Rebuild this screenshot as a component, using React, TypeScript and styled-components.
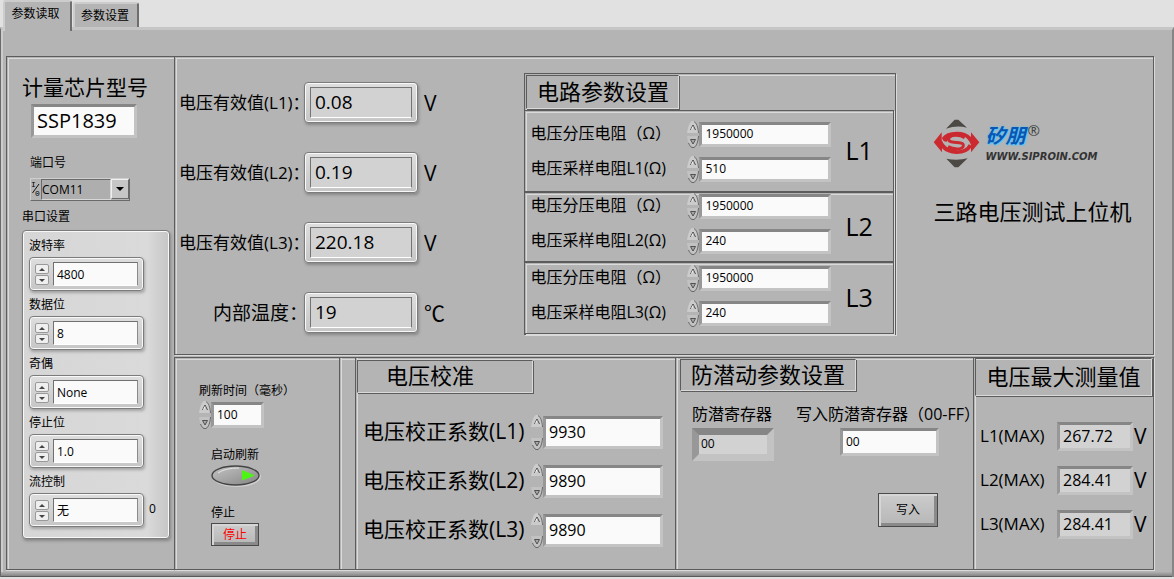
import React from "react";
import styled, { createGlobalStyle, css } from "styled-components";

const C = {
  face: "#b4b4b4",
  dark: "#5c5c5c",
  light: "#dadada",
  paper: "#fafafa",
  readout: "#d2d2d2",
};

const GlobalStyle = createGlobalStyle`
  *, *::before, *::after { box-sizing: border-box; }
  body {
    margin: 0;
    background: #e1e1e1;
    color: #000;
    font-family: "Open Sans", "Noto Sans CJK SC", sans-serif;
    font-size: 12px;
  }
  button, input, select { font: inherit; color: inherit; margin: 0; padding: 0; border-radius: 0; }
  h1, h2, p { margin: 0; font-weight: 400; }
`;

/* Etched line: dark stroke with a highlight one pixel further in. */
const etched = css`
  border: 1px solid ${C.dark};
  box-shadow:
    inset 1px 1px 0 ${C.face},
    inset 2px 2px 0 ${C.light},
    1px 1px 0 ${C.light};
`;

const etchedLeft = css`
  border-left: 1px solid ${C.dark};
  box-shadow: inset 1px 0 0 ${C.face}, inset 2px 0 0 ${C.light};
`;

/* ---------- window and tabs ---------- */

const Page = styled.div`
  min-width: 1120px;
  padding-bottom: 2px;
`;

const TabBar = styled.div`
  display: flex;
  align-items: flex-end;
  height: 27px;
  padding-left: 3px;
  gap: 1px;
`;

const Tab = styled.button<{ $active?: boolean }>`
  position: relative;
  z-index: ${(p) => (p.$active ? 1 : 0)};
  width: ${(p) => (p.$active ? 69 : 66)}px;
  height: ${(p) => (p.$active ? 31 : 25)}px;
  margin-bottom: ${(p) => (p.$active ? -4 : 0)}px;
  padding: ${(p) => (p.$active ? "0 4px 6px 0" : "0 2px 0 0")};
  border: 0;
  border-top: 2px solid #cccccc;
  border-left: 2px solid #cccccc;
  border-right: 2px solid #6e6e6e;
  border-radius: 3px 3px 0 0;
  background: ${C.face};
  line-height: 16px;
  white-space: nowrap;
`;

const TabPage = styled.main`
  padding: 26px 18px 0 3px;
  border-top: 3px solid #c6c6c6;
  border-left: 1px solid #6a6a6a;
  border-right: 2px solid #868686;
  background: ${C.face};
  box-shadow: inset 2px 0 0 #cccccc;
`;

const PageEdge = styled.div`
  height: 5px;
  margin: 2px -18px 0 -3px;
  background: linear-gradient(#b0b0b0, #858585);
  border-bottom: 1px solid #5a5a5a;
`;

const Board = styled.div`
  display: grid;
  grid-template-columns: 168px 1fr;
  margin-left: 2px;
`;

/* ---------- shared controls ---------- */

const sunken = css`
  border: 3px solid;
  border-color: #868686 #c3c3c3 #c3c3c3 #989898;
`;

const Sunken = styled.input<{ $w: number; $h: number; $size?: number; $deep?: boolean }>`
  ${sunken}
  border-width: ${(p) => (p.$deep ? 7 : 3)}px;
  width: ${(p) => p.$w}px;
  height: ${(p) => p.$h}px;
  padding: 0 ${(p) => (p.$deep ? 2 : 3)}px 2px;
  background: ${(p) => (p.readOnly ? C.readout : C.paper)};
  font-size: ${(p) => p.$size ?? 12}px;
  line-height: 16px;
  outline: none;
`;

const SpinBox = styled.span<{ $h: number }>`
  display: flex;
  flex-direction: column;
  justify-content: space-between;
  width: 12px;
  height: ${(p) => p.$h}px;
`;

const SpinHalf = styled.button`
  display: block;
  width: 12px;
  height: 13px;
  border: 0;
  background: none;
  svg { display: block; }
`;

const NumericRow = styled.span`
  display: flex;
  align-items: center;
`;

function Spinner({ name, h }: { name: string; h: number }) {
  return (
    <SpinBox $h={h}>
      <SpinHalf aria-label={`${name} +`}>
        <svg width="12" height="13" viewBox="0 0 12 13">
          <path d="M5 0H7C9 1 11 5 12 12H0C1 5 3 1 5 0Z" fill="#cbcbcb" />
          <path d="M7 .5C9.500 2 11 6 11.500 12" fill="none" stroke="#6a6a6a" />
          <path d="M3.500 9L6 4L8.500 9" fill="none" stroke="#4a4a4a" />
          <path d="M4.500 8.500L6 5.500" stroke="#f4f4f4" />
        </svg>
      </SpinHalf>
      <SpinHalf aria-label={`${name} -`}>
        <svg width="12" height="13" viewBox="0 0 12 13">
          <path d="M5 13H7C9 12 11 8 12 1H0C1 8 3 12 5 13Z" fill="#c2c2c2" />
          <path d="M11.500 1C11 7 9.500 11 7 12.500H5C3.500 12 2.500 10 1.500 8" fill="none" stroke="#666" />
          <path d="M3.500 4.500H8.500L6 9Z" fill="#aaa" stroke="#505050" />
        </svg>
      </SpinHalf>
    </SpinBox>
  );
}

function Numeric(p: { id: string; name: string; value: string; w: number; h: number; size?: number }) {
  return (
    <NumericRow>
      <Spinner name={p.name} h={p.h + 2} />
      <Sunken id={p.id} $w={p.w} $h={p.h} $size={p.size} defaultValue={p.value} />
    </NumericRow>
  );
}

const SmallLabel = styled.label`
  display: block;
  line-height: 16px;
  white-space: nowrap;
`;

const silver = css`
  border: 1px solid #7c7c7c;
  border-radius: 4px;
  background: linear-gradient(#dedede, #c6c6c6);
  box-shadow: inset 0 0 0 1px #f8f8f8, 1px 2px 3px rgba(0, 0, 0, 0.25);
`;

const TitleBox = styled.h2<{ $w?: number; $h: number }>`
  width: ${(p) => (p.$w ? `${p.$w}px` : "auto")};
  height: ${(p) => p.$h}px;
  border: 1px solid;
  border-color: ${C.dark} ${C.light} ${C.light} ${C.dark};
  box-shadow: 1px 1px 0 ${C.dark};
  font-size: 22px;
  line-height: ${(p) => p.$h - 4}px;
  text-align: center;
  white-space: nowrap;
`;

/* ---------- serial port column ---------- */

const PortColumn = styled.section`
  padding: 18px 0 30px 15px;
  border: solid ${C.dark};
  border-width: 1px 0 1px 1px;
  box-shadow: inset 1px 1px 0 ${C.face}, inset 2px 2px 0 ${C.light}, 0 1px 0 ${C.light};
`;

const ChipTitle = styled.label`
  display: block;
  font-size: 21px;
  line-height: 24px;
  white-space: nowrap;
`;

const ChipField = styled(Sunken)`
  display: block;
  margin: 5px 0 0 9px;
`;

const PortBlock = styled.div`
  margin: 17px 0 0 8px;
`;

const PortPicker = styled.div`
  display: flex;
  width: 100px;
  height: 23px;
  margin-top: 7px;
  border: 1px solid;
  border-color: #cfcfcf #6a6a6a #6a6a6a #cfcfcf;
  svg { flex: none; }
`;

const PortSelect = styled.select`
  flex: 1;
  min-width: 0;
  appearance: none;
  border: 1px solid;
  border-color: #6a6a6a #d8d8d8 #d8d8d8 #6a6a6a;
  background: #aeaeae;
  outline: none;
`;

const DropButton = styled.button`
  width: 18px;
  height: 20px;
  border: 1px solid;
  border-color: #f0f0f0 #6a6a6a #6a6a6a #f0f0f0;
  background: #c6c6c6;
  line-height: 0;
`;

const ClusterTitle = styled.p`
  margin-top: 8px;
  line-height: 16px;
`;

const Cluster = styled.fieldset`
  ${silver}
  width: 148px;
  min-width: 0;
  height: 309px;
  margin: 5px 0 0;
  padding: 7px 6px 0;
  background: linear-gradient(90deg, #d6d6d6, #dadada 85%, #c6c6c6);
`;

const ClusterItem = styled.div`
  height: 59px;
`;

const RingRow = styled.div`
  display: flex;
  align-items: center;
  gap: 5px;
`;

const RingFrame = styled.div`
  ${silver}
  display: flex;
  align-items: center;
  gap: 4px;
  width: 115px;
  height: 34px;
  margin-top: 3px;
  padding: 0 5px;
`;

const RingSpin = styled.div`
  display: flex;
  flex-direction: column;
  gap: 1px;
  width: 14px;
`;

const RingButton = styled.button`
  height: 10px;
  border: 1px solid #999;
  border-radius: 2px;
  background: #efefef;
  line-height: 0;
`;

const RingField = styled.input`
  width: 85px;
  height: 24px;
  padding: 0 3px;
  border: 1px solid;
  border-color: #707070 #8a8a8a #fff #707070;
  background: ${C.paper};
  outline: none;
`;

const rings = [
  { id: "baud", label: "波特率", value: "4800" },
  { id: "bits", label: "数据位", value: "8" },
  { id: "parity", label: "奇偶", value: "None" },
  { id: "stopbits", label: "停止位", value: "1.0" },
  { id: "flow", label: "流控制", value: "无", note: "0" },
];

function PortPanel() {
  return (
    <PortColumn>
      <ChipTitle htmlFor="chip">计量芯片型号</ChipTitle>
      <ChipField id="chip" $w={106} $h={34} $size={20} defaultValue="SSP1839" />
      <PortBlock>
        <SmallLabel htmlFor="port">端口号</SmallLabel>
        <PortPicker>
          <svg width="10" height="21" viewBox="0 0 10 21">
            <text x="0" y="8" fontSize="8" fontFamily="Liberation Mono, monospace">I</text>
            <text x="4" y="17" fontSize="8" fontFamily="Liberation Mono, monospace">0</text>
            <path d="M1.500 14L8 5" stroke="#000" strokeWidth=".9" />
          </svg>
          <PortSelect id="port" defaultValue="COM11">
            <option>COM11</option>
          </PortSelect>
          <DropButton aria-label="端口列表">
            <svg width="8" height="4" viewBox="0 0 8 4"><path d="M0 0H8L4 4Z" /></svg>
          </DropButton>
        </PortPicker>
      </PortBlock>
      <ClusterTitle id="serial">串口设置</ClusterTitle>
      <Cluster aria-labelledby="serial">
        {rings.map((r) => (
          <ClusterItem key={r.id}>
            <SmallLabel htmlFor={r.id}>{r.label}</SmallLabel>
            <RingRow>
              <RingFrame>
                <RingSpin>
                  <RingButton aria-label={`${r.label} +`}>
                    <svg width="6" height="3" viewBox="0 0 6 3"><path d="M0 3H6L3 0Z" fill="#444" /></svg>
                  </RingButton>
                  <RingButton aria-label={`${r.label} -`}>
                    <svg width="6" height="3" viewBox="0 0 6 3"><path d="M0 0H6L3 3Z" fill="#444" /></svg>
                  </RingButton>
                </RingSpin>
                <RingField id={r.id} defaultValue={r.value} />
              </RingFrame>
              {r.note}
            </RingRow>
          </ClusterItem>
        ))}
      </Cluster>
    </PortColumn>
  );
}

/* ---------- readings, circuit parameters, brand ---------- */

const WorkArea = styled.div`
  display: flex;
  flex-direction: column;
  gap: 2px;
`;

const TopPanel = styled.section`
  ${etched}
  display: grid;
  grid-template-columns: 350fr 371fr 257fr;
  align-items: start;
  padding-bottom: 19px;
`;

const Readings = styled.div`
  display: flex;
  flex-direction: column;
  gap: 30px;
  padding: 25px 0 0 4px;
`;

const Reading = styled.div`
  display: grid;
  grid-template-columns: 125px 114px 1fr;
  align-items: center;
  height: 40px;
`;

const ReadingLabel = styled.label<{ $wide?: boolean }>`
  padding-left: ${(p) => (p.$wide ? 34 : 0)}px;
  font-size: ${(p) => (p.$wide ? 19 : 17)}px;
  line-height: 24px;
  white-space: nowrap;
`;

const ReadingFrame = styled.div`
  ${silver}
  position: relative;
  height: 41px;
  padding: 4px 5px;
`;

const ReadingValue = styled.input`
  display: block;
  width: 100%;
  height: 31px;
  padding: 0 4px 2px;
  border: 1px solid;
  border-color: #747474 #747474 #fff #747474;
  background: ${C.readout};
  font-size: 19px;
  outline: none;
`;

const Unit = styled.span`
  padding-left: 6px;
  font-size: 21px;
  line-height: 24px;
`;

const readings = [
  { id: "v1", label: "电压有效值(L1)：", value: "0.08", unit: "V" },
  { id: "v2", label: "电压有效值(L2)：", value: "0.19", unit: "V" },
  { id: "v3", label: "电压有效值(L3)：", value: "220.18", unit: "V" },
  { id: "temp", label: "内部温度：", value: "19", unit: "℃", wide: true },
];

const Circuit = styled.div`
  ${etched}
  margin-top: 16px;
`;

const CircuitHead = styled.div`
  height: 36px;
  padding: 1px 0 0 1px;
`;

const CircuitGroup = styled.div<{ $h: number }>`
  ${etched}
  display: grid;
  grid-template-columns: 1fr 62px;
  height: ${(p) => p.$h}px;
  margin: 0 1px 0 0;
  border-left: 0;
`;

const CircuitRows = styled.div<{ $top: number }>`
  display: flex;
  flex-direction: column;
  gap: 8px;
  padding: ${(p) => p.$top}px 0 0 5px;
`;

const CircuitRow = styled.div`
  display: grid;
  grid-template-columns: 157px 1fr;
  align-items: center;
  height: 27px;
`;

const Label16 = styled.label`
  padding-bottom: 3px;
  font-size: 16px;
  line-height: 20px;
  white-space: nowrap;
`;

const GroupName = styled.span`
  align-self: center;
  padding: 0 0 3px 14px;
  font-size: 25px;
  line-height: 30px;
`;

const groups = [
  { n: 1, h: 82, top: 10, sample: "510" },
  { n: 2, h: 70, top: 0, sample: "240" },
  { n: 3, h: 72, top: 2, sample: "240" },
];

const Brand = styled.div`
  padding: 62px 0 0 37px;
`;

const LogoRow = styled.div`
  display: flex;
  gap: 5px;
  height: 50px;
`;

const LogoWords = styled.div`
  padding-top: 4px;
`;

const LogoName = styled.div`
  display: flex;
  align-items: flex-start;
  gap: 2px;
  height: 26px;
  color: #0a56b0;
  font-size: 20px;
  font-style: italic;
  font-weight: 700;
  line-height: 26px;
  text-shadow: 0 0 2px #3fc0ff, 1px 1px 1px #5cc8ff;
  sup {
    color: #444;
    font-size: 15px;
    font-style: normal;
    font-weight: 400;
    line-height: 14px;
    text-shadow: none;
  }
`;

const LogoUrl = styled.div`
  color: #333;
  font: italic 700 10px/16px "DejaVu Sans", sans-serif;
`;

const ProductName = styled.h1`
  margin-top: 27px;
  font-size: 22px;
  line-height: 30px;
  white-space: nowrap;
`;

function Logo() {
  return (
    <LogoRow>
      <svg width="47" height="49" viewBox="25 28 141 147">
        <path d="M90 30H101L127 54Q96 46 64 57Z" fill="#4c4844" />
        <path d="M90 173H101L129 146Q98 154 65 147Z" fill="#4c4844" />
        <path d="M27 98L51 68V92Q62 120 96 122Q124 122 132 104Q140 106 141 112Q130 132 96 133Q66 132 52 116V128Z" fill="#cb2a30" />
        <path d="M164 98L139 128V106Q130 82 112 78Q78 76 66 96Q54 96 52 84Q64 66 96 66Q124 66 139 82V68Z" fill="#cb2a30" />
        <path d="M120 84Q108 76 90 77Q72 79 72 89Q72 97 88 98L104 99Q117 100 116 109Q114 117 98 118Q82 118 70 111" fill="none" stroke="#cb2a30" strokeWidth="9" />
      </svg>
      <LogoWords>
        <LogoName>矽朋<sup>®</sup></LogoName>
        <LogoUrl>WWW.SIPROIN.COM</LogoUrl>
      </LogoWords>
    </LogoRow>
  );
}

function Overview() {
  return (
    <TopPanel>
      <Readings>
        {readings.map((r) => (
          <Reading key={r.id}>
            <ReadingLabel htmlFor={r.id} $wide={r.wide}>{r.label}</ReadingLabel>
            <ReadingFrame><ReadingValue id={r.id} readOnly value={r.value} /></ReadingFrame>
            <Unit>{r.unit}</Unit>
          </Reading>
        ))}
      </Readings>
      <Circuit>
        <CircuitHead><TitleBox $w={153} $h={34}>电路参数设置</TitleBox></CircuitHead>
        {groups.map((g) => (
          <CircuitGroup key={g.n} $h={g.h}>
            <CircuitRows $top={g.top}>
              <CircuitRow>
                <Label16 htmlFor={`div${g.n}`}>电压分压电阻（Ω）</Label16>
                <Numeric id={`div${g.n}`} name={`分压电阻 ${g.n}`} value="1950000" w={132} h={25} />
              </CircuitRow>
              <CircuitRow>
                <Label16 htmlFor={`smp${g.n}`}>电压采样电阻L{g.n}(Ω)</Label16>
                <Numeric id={`smp${g.n}`} name={`采样电阻 ${g.n}`} value={g.sample} w={132} h={25} />
              </CircuitRow>
            </CircuitRows>
            <GroupName>L{g.n}</GroupName>
          </CircuitGroup>
        ))}
      </Circuit>
      <Brand>
        <Logo />
        <ProductName>三路电压测试上位机</ProductName>
      </Brand>
    </TopPanel>
  );
}

/* ---------- lower row ---------- */

const LowerRow = styled.section`
  ${etched}
  flex: 1;
  display: grid;
  grid-template-columns: 164fr 16fr 320fr 298fr 180fr;
`;

const Refresh = styled.div`
  display: flex;
  flex-direction: column;
  gap: 18px;
  padding: 25px 0 0 24px;
`;

const RefreshGroup = styled.div<{ $inset?: boolean }>`
  display: flex;
  flex-direction: column;
  align-items: flex-start;
  gap: 2px;
  padding-left: ${(p) => (p.$inset ? 12 : 0)}px;
`;

const OvalSwitch = styled.button`
  display: block;
  width: 50px;
  height: 22px;
  border: 0;
  background: none;
  svg { display: block; }
`;

const PushButton = styled.button<{ $w: number; $h: number; $red?: boolean }>`
  width: ${(p) => p.$w}px;
  height: ${(p) => p.$h}px;
  border: 1px solid #4a4a4a;
  background: linear-gradient(#cccccc, #b6b6b6);
  box-shadow:
    inset 1px 1px 0 1px #d6d6d6,
    inset -2px -2px 0 1px #8a8a8a;
  color: ${(p) => (p.$red ? "#f00" : "#000")};
  line-height: 16px;
`;

const Gutter = styled.div`
  ${etchedLeft}
`;

const Section = styled.div`
  ${etchedLeft}
  min-width: 0;
`;

const CalTitle = styled(TitleBox)`
  margin: 2px 0 0 1px;
  padding-right: 30px;
`;

const CalRows = styled.div`
  display: flex;
  flex-direction: column;
  gap: 15px;
  padding: 22px 0 0 7px;
`;

const CalRow = styled.div`
  display: grid;
  grid-template-columns: 168px 1fr;
  align-items: center;
  height: 34px;
`;

const CalLabel = styled.label`
  padding-bottom: 4px;
  font-size: 21px;
  line-height: 26px;
  white-space: nowrap;
`;

const CreepTitle = styled(TitleBox)`
  margin: 1px 0 0 4px;
`;

const Registers = styled.div`
  display: grid;
  grid-template-columns: 104px 1fr;
  padding: 13px 0 0 16px;
`;

const Register = styled.div<{ $indent?: boolean }>`
  display: flex;
  flex-direction: column;
  gap: 1px;
  input { margin-left: ${(p) => (p.$indent ? 44 : 0)}px; }
`;

const WriteRow = styled.div`
  padding: 32px 0 0 202px;
`;

const MaxTitle = styled(TitleBox)`
  margin: 0 1px 0 1px;
`;

const MaxRows = styled.div`
  display: flex;
  flex-direction: column;
  gap: 15px;
  padding: 26px 0 0 6px;
`;

const MaxRow = styled.div`
  display: grid;
  grid-template-columns: 77px 76px 1fr;
  align-items: center;
  height: 29px;
`;

const MaxLabel = styled.label`
  padding-bottom: 2px;
  font-size: 17px;
  line-height: 24px;
`;

const MaxUnit = styled.span`
  padding: 0 0 2px 1px;
  font-size: 21px;
  line-height: 24px;
`;

const calibration = [
  { n: 1, value: "9930" },
  { n: 2, value: "9890" },
  { n: 3, value: "9890" },
];

const maxima = [
  { n: 1, value: "267.72" },
  { n: 2, value: "284.41" },
  { n: 3, value: "284.41" },
];

function Lower() {
  return (
    <LowerRow>
      <Refresh>
        <RefreshGroup>
          <SmallLabel htmlFor="period">刷新时间（毫秒）</SmallLabel>
          <Numeric id="period" name="刷新时间" value="100" w={53} h={26} />
        </RefreshGroup>
        <RefreshGroup $inset>
          <SmallLabel htmlFor="run">启动刷新</SmallLabel>
          <OvalSwitch id="run" aria-pressed="true">
            <svg width="50" height="22" viewBox="0 0 50 22">
              <defs>
                <linearGradient id="oval" x1="0" y1="0" x2="1" y2="1">
                  <stop offset="0" stopColor="#c4c4c4" />
                  <stop offset="1" stopColor="#848484" />
                </linearGradient>
              </defs>
              <ellipse cx="25.500" cy="11.500" rx="24.500" ry="10.500" fill="#cfcfcf" />
              <ellipse cx="24.500" cy="10.500" rx="23.500" ry="9.500" fill="url(#oval)" stroke="#444" strokeWidth="1.400" />
              <path d="M7 8Q14 3 28 3" fill="none" stroke="#e4e4e4" />
              <path d="M31 5L44 10.500L31 15.500Z" fill="#4cf514" />
            </svg>
          </OvalSwitch>
        </RefreshGroup>
        <RefreshGroup $inset>
          <SmallLabel htmlFor="stop">停止</SmallLabel>
          <PushButton id="stop" $w={48} $h={23} $red>停止</PushButton>
        </RefreshGroup>
      </Refresh>
      <Gutter />
      <Section>
        <CalTitle $w={176} $h={33}>电压校准</CalTitle>
        <CalRows>
          {calibration.map((c) => (
            <CalRow key={c.n}>
              <CalLabel htmlFor={`cal${c.n}`}>电压校正系数(L{c.n})</CalLabel>
              <Numeric id={`cal${c.n}`} name={`校正系数 ${c.n}`} value={c.value} w={120} h={33} size={16} />
            </CalRow>
          ))}
        </CalRows>
      </Section>
      <Section>
        <CreepTitle $w={176} $h={32}>防潜动参数设置</CreepTitle>
        <Registers>
          <Register>
            <Label16 htmlFor="reg">防潜寄存器</Label16>
            <Sunken id="reg" readOnly value="00" $w={82} $h={33} $deep />
          </Register>
          <Register $indent>
            <Label16 htmlFor="newreg">写入防潜寄存器（00-FF）</Label16>
            <Sunken id="newreg" defaultValue="00" $w={99} $h={28} />
          </Register>
        </Registers>
        <WriteRow><PushButton $w={60} $h={34}>写入</PushButton></WriteRow>
      </Section>
      <Section>
        <MaxTitle $h={38}>电压最大测量值</MaxTitle>
        <MaxRows>
          {maxima.map((m) => (
            <MaxRow key={m.n}>
              <MaxLabel htmlFor={`max${m.n}`}>L{m.n}(MAX)</MaxLabel>
              <Sunken id={`max${m.n}`} readOnly value={m.value} $w={76} $h={29} $size={16} />
              <MaxUnit>V</MaxUnit>
            </MaxRow>
          ))}
        </MaxRows>
      </Section>
    </LowerRow>
  );
}

export default function App() {
  return (
    <>
      <GlobalStyle />
      <Page>
        <TabBar role="tablist">
          <Tab role="tab" aria-selected="true" $active>参数读取</Tab>
          <Tab role="tab" aria-selected="false">参数设置</Tab>
        </TabBar>
        <TabPage>
          <Board>
            <PortPanel />
            <WorkArea>
              <Overview />
              <Lower />
            </WorkArea>
          </Board>
          <PageEdge />
        </TabPage>
      </Page>
    </>
  );
}
